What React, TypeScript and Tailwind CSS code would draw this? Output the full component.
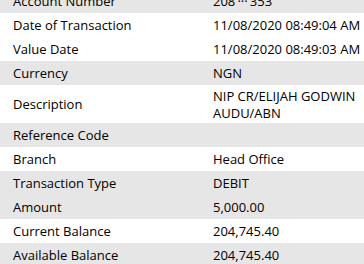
const rows: { label: string; value: string; shade: boolean; tall?: boolean }[] = [
  { label: "Account Number", value: "208\u2009\u00b7\u00b7\u00b7\u2009353", shade: true },
  { label: "Date of Transaction", value: "11/08/2020 08:49:04 AM", shade: false },
  { label: "Value Date", value: "11/08/2020 08:49:03 AM", shade: false },
  { label: "Currency", value: "NGN", shade: true },
  { label: "Description", value: "NIP CR/ELIJAH GODWIN AUDU/ABN", shade: false, tall: true },
  { label: "Reference Code", value: "", shade: true },
  { label: "Branch", value: "Head Office", shade: false },
  { label: "Transaction Type", value: "DEBIT", shade: true },
  { label: "Amount", value: "5,000.00", shade: true },
  { label: "Current Balance", value: "204,745.40", shade: false },
  { label: "Available Balance", value: "204,745.40", shade: true },
];

export default function App() {
  return (
    <div
      className="w-[364px] h-[264px] overflow-hidden bg-white text-black text-[13px]"
      style={{ fontFamily: '"Open Sans", "Noto Sans", sans-serif' }}
    >
      <div className="-mt-[11px]">
        {rows.map((r) => (
          <div
            key={r.label}
            className={`flex items-center pt-[1px] ${r.tall ? "h-[38px]" : "h-[24px]"} ${
              r.shade ? "bg-[#e6e6e6]" : "bg-white"
            }`}
          >
            <div className="w-[213px] pl-[13px] shrink-0 whitespace-nowrap">{r.label}</div>
            <div className="w-[148px] leading-[17px]">{r.value}</div>
          </div>
        ))}
      </div>
    </div>
  );
}
